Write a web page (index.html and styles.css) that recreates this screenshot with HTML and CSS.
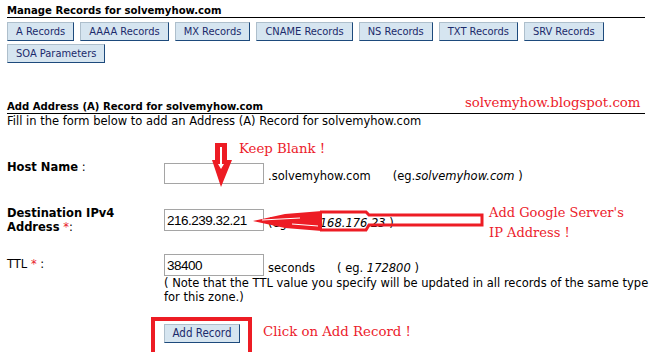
FILE: index.html
```html
<!DOCTYPE html>
<html>
<head>
<meta charset="utf-8">
<link rel="stylesheet" href="styles.css">
</head>
<body>
<div class="page">
  <div class="sec-title">Manage Records for solvemyhow.com</div>
  <div class="tabs">
    <button class="btn">A Records</button>
    <button class="btn">AAAA Records</button>
    <button class="btn">MX Records</button>
    <button class="btn">CNAME Records</button>
    <button class="btn">NS Records</button>
    <button class="btn">TXT Records</button>
    <button class="btn">SRV Records</button>
    <button class="btn">SOA Parameters</button>
  </div>

  <div class="sec-title sec2">Add Address (A) Record for solvemyhow.com</div>
  <p class="intro">Fill in the form below to add an Address (A) Record for solvemyhow.com</p>

  <div class="row row-host">
    <div class="label"><b>Host Name</b> :</div>
    <div class="field">
      <input class="inp" value="">
      <span class="suffix">.solvemyhow.com</span>
      <span class="eg">(eg.<i>solvemyhow.com</i> )</span>
    </div>
  </div>

  <div class="row row-ip">
    <div class="label"><b>Destination IPv4<br>Address</b> <span class="req">*</span>:</div>
    <div class="field">
      <input class="inp" value="216.239.32.21">
      <span class="suffix">(eg. <i>203.168.176.23</i> )</span>
    </div>
  </div>

  <div class="row row-ttl">
    <div class="label label-ttl">TTL <span class="req">*</span> :</div>
    <div class="ttl-cell">
      <div class="field">
        <input class="inp" value="38400">
        <span class="suffix">seconds</span>
        <span class="eg eg-ttl">( eg. <i>172800</i> )</span>
      </div>
      <p class="note">( Note that the TTL value you specify will be updated in all records of the same type<br>for this zone.)</p>
    </div>
  </div>

  <div class="row row-submit">
    <div></div>
    <div><button class="btn btn-add">Add Record</button></div>
  </div>

  <span class="anno anno-blog">solvemyhow.blogspot.com</span>
  <span class="anno anno-keep">Keep Blank !</span>
  <span class="anno anno-google">Add Google Server's<br>IP Address !</span>
  <span class="anno anno-click">Click on Add Record !</span>

  <svg class="marks" width="649" height="352" viewBox="0 0 649 352">
    <path d="M215,143 L227,143 L227,160 L232,160 L221,187 L212,160 L215,160 Z" fill="#ed1c24"/>
    <rect x="220" y="147" width="2" height="17" fill="#fff"/>
    <path d="M218,164 L224,164 L221,169 Z" fill="#fff"/>
    <path d="M253,221 L285,214 L322,211 L322,231 L285,228 Z" fill="#ed1c24"/>
    <path d="M262,220 L300,218" stroke="#fff" stroke-width="1" fill="none"/>
    <path d="M292,224 L318,226" stroke="#fff" stroke-width="1" fill="none"/>
    <path d="M320,212 L366,212 L369,215 L482,215 L482,225 L369,225 L366,230 L320,230" stroke="#ed1c24" stroke-width="3" fill="none"/>
    <rect x="153" y="319" width="97" height="35" stroke="#ed1c24" stroke-width="4" fill="none"/>
  </svg>
</div>
</body>
</html>
```

FILE: styles.css
```css
html, body {
  margin: 0;
  padding: 0;
  background: #fff;
}

body {
  font-family: "DejaVu Sans", Verdana, sans-serif;
  font-size: 11.5px;
  color: #000;
  height: 352px;
  overflow: hidden;
}

.page {
  position: relative;
  width: 638px;
  padding: 0 4px 0 7px;
}

.sec-title {
  font-weight: bold;
  font-size: 10.1px;
  line-height: 13px;
  padding-top: 4px;
  border-bottom: 1px solid #000;
}

.sec2 {
  margin-top: 37px;
  padding-top: 0;
}

.tabs {
  display: flex;
  flex-wrap: wrap;
  gap: 3px 6px;
  margin-top: 4px;
  width: 620px;
}

.btn {
  height: 19px;
  padding: 0 8px;
  margin: 0;
  font-family: "DejaVu Sans Condensed", "Liberation Sans", sans-serif;
  font-stretch: condensed;
  font-size: 11px;
  line-height: 17px;
  color: #1b2a6b;
  background: #d6e5f0;
  border: 1px solid;
  border-color: #aebfcc #1d4a7c #1d4a7c #aebfcc;
}

.intro {
  margin: 0;
  line-height: 14px;
}

.row {
  display: grid;
  grid-template-columns: 157px auto;
  align-items: start;
}

.label {
  line-height: 14px;
}

.req {
  color: #e8202a;
}

.field {
  display: flex;
  align-items: flex-end;
}

.inp {
  box-sizing: border-box;
  width: 100px;
  height: 22px;
  margin: 0;
  padding: 0 2px;
  border: 1px solid #a5a5a5;
  font-family: "Liberation Sans", Arial, sans-serif;
  font-size: 13.5px;
  letter-spacing: -0.5px;
  color: #000;
  background: #fff;
}

.suffix, .eg {
  line-height: 14px;
  padding-bottom: 1px;
  white-space: nowrap;
}

.suffix {
  margin-left: 4px;
}

.eg {
  margin-left: 22px;
}

.eg-ttl {
  margin-left: 22px;
}

.row-host {
  margin-top: 32px;
}

.row-host .inp {
  margin-top: 3px;
  height: 21px;
}

.row-ip {
  margin-top: 22px;
}

.row-ip .field {
  margin-top: 3px;
}

.row-ttl {
  margin-top: 20px;
}

.label-ttl {
  margin-top: 3px;
}

.note {
  margin: 0;
  line-height: 14px;
  white-space: nowrap;
}

.row-submit {
  margin-top: 20px;
}

.btn-add {
  width: 76px;
  padding: 0;
  font-size: 11.5px;
}

.anno {
  position: absolute;
  font-family: "DejaVu Serif", Georgia, serif;
  font-size: 13.3px;
  line-height: 16px;
  color: #ec1c2c;
  white-space: nowrap;
}

.anno-blog { left: 465px; top: 95px; }
.anno-keep { left: 239px; top: 141px; }
.anno-google { left: 489px; top: 203px; line-height: 20px; font-size: 13px; }
.anno-click { left: 263px; top: 324px; }

.marks {
  position: absolute;
  left: 0;
  top: 0;
  pointer-events: none;
}
```
